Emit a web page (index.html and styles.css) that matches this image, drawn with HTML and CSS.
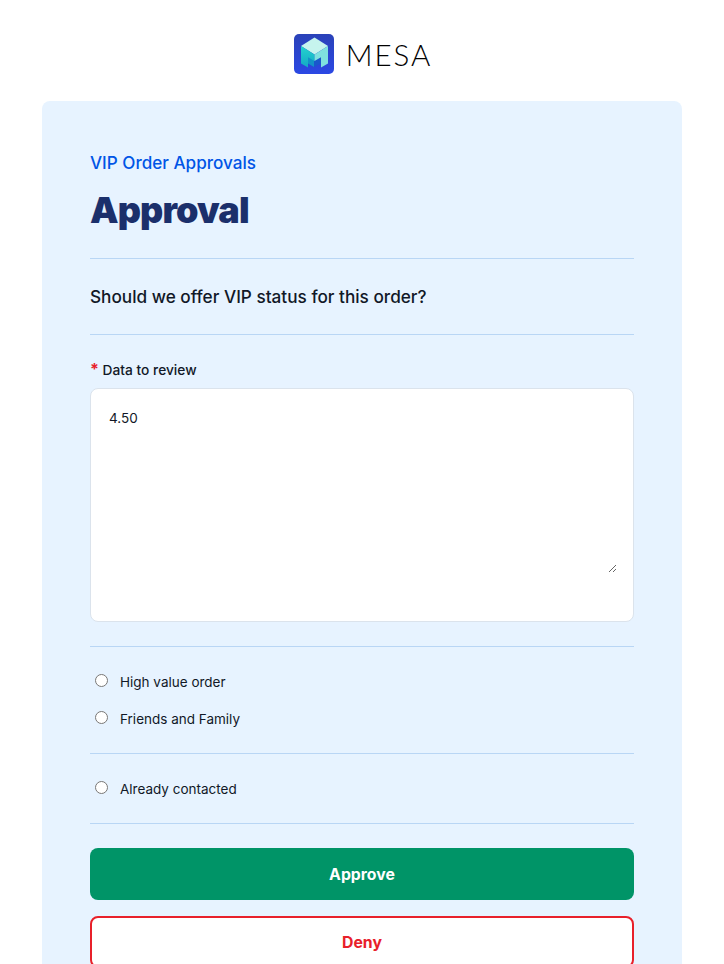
FILE: index.html
```html
<!DOCTYPE html>
<html lang="en">
<head>
    <meta charset="UTF-8">
    <meta name="viewport" content="width=device-width, initial-scale=1.0">
    <title>Approval</title>
    <link rel="stylesheet" href="styles.css">
</head>
<body>
    <header class="brand">
        <svg class="brand-mark" width="40" height="40" viewBox="0 0 40 40">
            <defs>
                <linearGradient id="markBg" x1="0" y1="0" x2="0" y2="1">
                    <stop offset="0" stop-color="#2a42b8"/>
                    <stop offset="1" stop-color="#2b48e4"/>
                </linearGradient>
                <linearGradient id="markLeft" x1="0" y1="0" x2="0" y2="1">
                    <stop offset="0" stop-color="#24d3cf"/>
                    <stop offset="1" stop-color="#14a9c4"/>
                </linearGradient>
            </defs>
            <rect width="40" height="40" rx="5" fill="url(#markBg)"/>
            <path d="M14 20 20 23.5V33L14 29.5Z" fill="#1392c8"/>
            <path d="M27 20 20 23.5V33L27 29.5Z" fill="#1a58cc"/>
            <path d="M20.5 3.5 34 12 20.5 20.5 7 12Z" fill="#c6f4ee"/>
            <path d="M7 12 20.5 20.5V27L14 23.2V33.5L7 29.5Z" fill="url(#markLeft)"/>
            <path d="M34 12 20.5 20.5V27L27 23.2V33.5L34 29.5Z" fill="#7fe2df"/>
        </svg>
        <span class="brand-name">MESA</span>
    </header>

    <main class="card">
        <p class="eyebrow">VIP Order Approvals</p>
        <h1 class="title">Approval</h1>
        <hr class="rule">
        <p class="question">Should we offer VIP status for this order?</p>
        <hr class="rule">

        <label class="field-label" for="review"><span class="required">*</span> Data to review</label>
        <div class="review-box">
            <textarea class="review" id="review">4.50</textarea>
        </div>
        <hr class="rule">

        <div class="options">
            <label class="option"><input type="radio" name="reason"> High value order</label>
            <label class="option"><input type="radio" name="reason"> Friends and Family</label>
        </div>
        <hr class="rule">

        <div class="options">
            <label class="option"><input type="radio" name="contacted"> Already contacted</label>
        </div>
        <hr class="rule">

        <div class="actions">
            <button class="btn approve">Approve</button>
            <button class="btn deny">Deny</button>
        </div>
    </main>
</body>
</html>
```

FILE: styles.css
```css
body {
    margin: 0;
    background: #ffffff;
    color: #111827;
    font-family: Inter, "Liberation Sans", sans-serif;
}
.brand {
    display: flex;
    justify-content: center;
    align-items: center;
    gap: 12px;
    height: 40px;
    padding: 34px 0 27px;
}
.brand-mark {
    display: block;
}
.brand-name {
    margin-right: -2px;
    font-family: Lato, sans-serif;
    font-weight: 300;
    font-size: 29.5px;
    letter-spacing: 2px;
    color: #000000;
}
.card {
    margin: 0 42px;
    padding: 48px;
    background: #e7f3ff;
    border-radius: 8px;
}
.eyebrow {
    margin: 0;
    height: 28px;
    font-size: 17.1px;
    line-height: 28px;
    font-weight: 500;
    color: #0055e6;
}
.title {
    margin: 13px 0 0;
    height: 40px;
    font-size: 36px;
    line-height: 40px;
    font-weight: 900;
    letter-spacing: -0.9px;
    color: #1b2f6b;
}
.rule {
    margin: 0;
    border: none;
    border-top: 1px solid #b9d6f5;
}
.title + .rule {
    margin-top: 28px;
}
.question {
    margin: 0;
    padding: 24px 0;
    font-size: 17.2px;
    line-height: 27px;
    font-weight: 500;
}
.field-label {
    display: block;
    height: 21px;
    margin-top: 24px;
    font-size: 13.75px;
    line-height: 23px;
    font-weight: 500;
}
.required {
    color: #e8202a;
    font-size: 16px;
    line-height: 1;
    font-weight: 700;
}
.review-box {
    height: 232px;
    margin: 8px 0 24px;
    border: 1px solid #dbe3ec;
    border-radius: 8px;
    background: #ffffff;
}
.review {
    display: block;
    box-sizing: border-box;
    width: calc(100% - 32px);
    height: 167px;
    margin: 17px 16px 0;
    padding: 2px;
    border: none;
    outline: none;
    background: transparent;
    color: #111827;
    font-family: Inter, sans-serif;
    font-size: 13.5px;
    line-height: 20px;
}
.options {
    display: flex;
    flex-direction: column;
    gap: 15px;
    padding: 24px 0 23px;
}
.option {
    display: flex;
    align-items: center;
    gap: 12px;
    height: 22px;
    padding-left: 5px;
    font-size: 13.5px;
    line-height: 22px;
}
.option input {
    margin: 0;
    width: 13px;
    height: 13px;
    position: relative;
    top: -2px;
}
.actions {
    display: flex;
    flex-direction: column;
    gap: 16px;
    margin-top: 24px;
}
.btn {
    height: 52px;
    border-radius: 8px;
    font-family: Inter, sans-serif;
    font-size: 15.8px;
    font-weight: 700;
    cursor: pointer;
}
.approve {
    border: none;
    background: #009467;
    color: #ffffff;
}
.deny {
    border: 2px solid #e8202a;
    background: #ffffff;
    color: #e8202a;
}
```
